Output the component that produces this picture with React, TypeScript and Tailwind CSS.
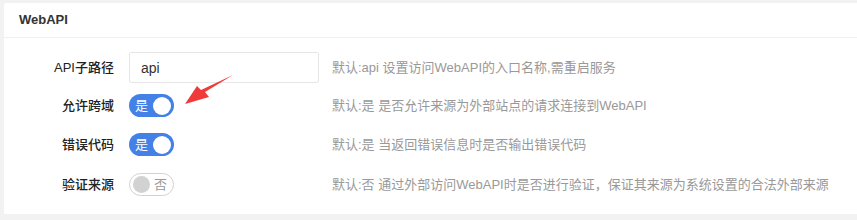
import React from "react";

interface SwitchProps {
  on: boolean;
}

const Switch: React.FC<SwitchProps> = ({ on }) => {
  if (on) {
    return (
      <div className="w-[45px] h-[23px] rounded-full bg-[#4381e6] flex items-center justify-between pl-[6px] pr-[3px]">
        <span className="text-white text-[13px] leading-none">是</span>
        <span className="w-[18px] h-[18px] rounded-full bg-white" />
      </div>
    );
  }
  return (
    <div className="w-[45px] h-[23px] rounded-full bg-white border border-[#d2d2d2] flex items-center justify-between pl-[3px] pr-[6px]">
      <span className="w-[17px] h-[17px] rounded-full bg-[#d2d2d2]" />
      <span className="text-[#999] text-[13px] leading-none">否</span>
    </div>
  );
};

const Row: React.FC<{ label: string; desc: string; children: React.ReactNode; h: string }> = ({
  label,
  desc,
  children,
  h,
}) => (
  <div className={`flex items-center ${h}`}>
    <label className="w-[110px] text-right text-[13px] text-[#222] font-medium">{label}</label>
    <div className="w-[190px] ml-[15px] flex">{children}</div>
    <div className="ml-[13px] text-[13px] text-[#999]">{desc}</div>
  </div>
);

export default function App() {
  return (
    <div
      className="w-[857px] h-[220px] bg-[#f2f2f2] pt-[3px] pl-[4px] relative"
      style={{ fontFamily: '"Liberation Sans", "Noto Sans CJK SC", sans-serif' }}
    >
      <div className="bg-white h-[211px] rounded-tl-[2px]">
        <div className="h-[35px] flex items-center pl-[15px] border-b border-[#f0f0f0] text-[13px] font-bold text-[#333]">
          WebAPI
        </div>
        <div className="pt-[14px]">
          <Row label="API子路径" desc="默认:api 设置访问WebAPI的入口名称,需重启服务" h="h-[31px]">
            <input
              readOnly
              value="api"
              className="w-[190px] h-[31px] border border-[#e6e6e6] rounded-[2px] px-[11px] text-[14px] text-[#333] outline-none"
            />
          </Row>
          <div className="h-[11px]" />
          <Row label="允许跨域" desc="默认:是 是否允许来源为外部站点的请求连接到WebAPI" h="h-[23px]">
            <Switch on={true} />
          </Row>
          <div className="h-[16px]" />
          <Row label="错误代码" desc="默认:是 当返回错误信息时是否输出错误代码" h="h-[23px]">
            <Switch on={true} />
          </Row>
          <div className="h-[17px]" />
          <Row label="验证来源" desc="默认:否 通过外部访问WebAPI时是否进行验证，保证其来源为系统设置的合法外部来源" h="h-[23px]">
            <Switch on={false} />
          </Row>
        </div>
      </div>
      <svg className="absolute left-0 top-0" width="857" height="220" viewBox="0 0 857 220">
        <polygon
          points="233,75 205,92 209,97 185,104 197,86 201,90"
          fill="#f03a3a"
        />
      </svg>
    </div>
  );
}
